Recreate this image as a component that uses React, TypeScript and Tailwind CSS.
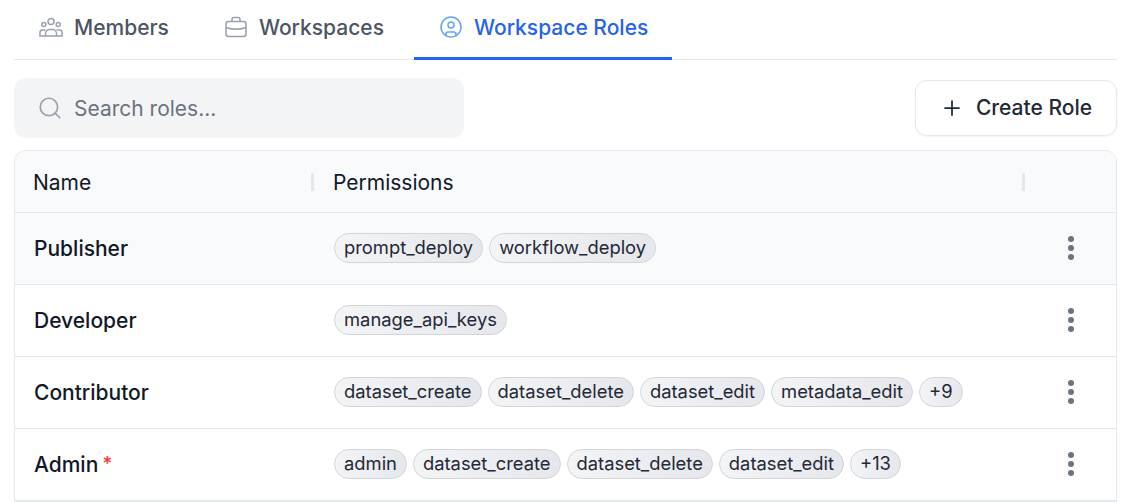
import { CircleUser, Plus, Search } from "lucide-react";
import React from "react";

const roles = [
  { name: "Publisher", perms: ["prompt_deploy", "workflow_deploy"], active: true },
  { name: "Developer", perms: ["manage_api_keys"] },
  { name: "Contributor", perms: ["dataset_create", "dataset_delete", "dataset_edit", "metadata_edit", "+9"] },
  { name: "Admin", perms: ["admin", "dataset_create", "dataset_delete", "dataset_edit", "+13"], required: true },
];

const MembersIcon = () => (
  <svg viewBox="0 0 24 24" className="w-6 h-6 -mt-[2px] text-gray-400" fill="none" stroke="currentColor" strokeWidth="1.5">
    <circle cx="12" cy="6.5" r="3" />
    <circle cx="4.8" cy="9.5" r="2" />
    <circle cx="19.2" cy="9.5" r="2" />
    <path d="M6.5 21v-2.5a4 4 0 0 1 4-4h3a4 4 0 0 1 4 4V21z" />
    <path d="M6.5 15H3.5a2.5 2.5 0 0 0-2.5 2.5V21h5.5M17.5 15h3a2.5 2.5 0 0 1 2.5 2.5V21h-5.5" />
  </svg>
);

const BriefcaseIcon = () => (
  <svg viewBox="0 0 24 24" className="w-6 h-6 -mt-[2px] text-gray-400" fill="none" stroke="currentColor" strokeWidth="1.5">
    <rect x="2" y="6.5" width="20" height="15" rx="2.5" />
    <path d="M8 6.5V4.5A2 2 0 0 1 10 2.5h4a2 2 0 0 1 2 2v2" />
    <path d="M2 12.5c6 2.2 14 2.2 20 0" />
    <path d="M12 13.5v.5" />
  </svg>
);

const Tab = ({ icon, label, active }: { icon: React.ReactNode; label: string; active?: boolean }) => (
  <button
    className={`flex items-center gap-[11px] pl-[25px] pr-6 pb-[2px] h-[60px] text-[21px] font-medium border-b-[3px] ${
      active ? "border-[#2563eb] text-[#2563eb]" : "border-transparent text-[#4b5563]"
    }`}
  >
    {icon}
    {label}
  </button>
);

const Dots = () => (
  <svg viewBox="0 0 10 28" className="w-[10px] h-7 -mt-[2px] text-[#6b7280]" fill="currentColor">
    <circle cx="5" cy="5" r="3" />
    <circle cx="5" cy="14" r="3" />
    <circle cx="5" cy="23" r="3" />
  </svg>
);

export default function App() {
  return (
    <div className="h-[502px] overflow-hidden bg-white pl-[14px] pr-4 font-['Inter',sans-serif]">
      <div className="flex gap-[6px] border-b border-[#e5e7eb] h-[60px]">
        <Tab icon={<MembersIcon />} label="Members" />
        <Tab icon={<BriefcaseIcon />} label="Workspaces" />
        <Tab icon={<CircleUser className="w-6 h-6 -mt-[2px] text-[#60a5fa]" strokeWidth={1.5} />} label="Workspace Roles" active />
      </div>

      <div className="flex items-center justify-between mt-[18px] h-[60px]">
        <div className="flex items-center gap-[11px] w-[450px] h-[60px] pl-[23px] rounded-xl bg-[#f3f4f6]">
          <Search className="w-[26px] h-[26px] text-[#9ca3af]" strokeWidth={1.6} />
          <span className="mt-[2px] text-[21px] text-[#6b7280]">Search roles...</span>
        </div>
        <button className="flex items-center justify-center gap-[12px] w-[202px] h-[56px] rounded-xl border border-[#e5e7eb] bg-white shadow-xs text-[21px] font-medium text-[#1f2937]">
          <Plus className="w-6 h-6" strokeWidth={1.75} />
          Create Role
        </button>
      </div>

      <div className="mt-3 rounded-t-xl border border-[#e5e7eb]">
        <div className="flex items-center h-[62px] bg-[#f9fafb] rounded-t-xl border-b border-[#e5e7eb] text-[21px] text-[#111827]">
          <div className="w-[299px] pl-[18px] border-r-[3px] border-[#e5e7eb] h-[18px] flex items-center pt-[2px]">Name</div>
          <div className="w-[711px] pl-[19px] border-r-[3px] border-[#e5e7eb] h-[18px] flex items-center pt-[2px]">Permissions</div>
        </div>
        {roles.map((role) => (
          <div
            key={role.name}
            className={`flex items-center h-[72px] border-b border-[#e5e7eb] ${role.active ? "bg-[#f9fafb]" : "bg-white"}`}
          >
            <div className="w-[299px] pl-[19px] text-[21px] font-medium text-[#111827] flex items-center gap-[4px]">
              {role.name}
              {role.required && <span className="text-[#ef4444] text-[19px] font-semibold">*</span>}
            </div>
            <div className="w-[711px] pl-[20px] pr-4 pb-[2px] flex items-center gap-[6px]">
              {role.perms.map((perm) => (
                <span
                  key={perm}
                  className="h-[30px] px-[9px] pt-[1px] flex items-center rounded-full border border-[#d1d5db] bg-linear-to-r from-[#f3f4f6] to-[#e5e7eb] text-[18.375px] text-[#1f2937]"
                >
                  {perm}
                </span>
              ))}
            </div>
            <div className="flex-1 flex justify-center">
              <Dots />
            </div>
          </div>
        ))}
      </div>
    </div>
  );
}
